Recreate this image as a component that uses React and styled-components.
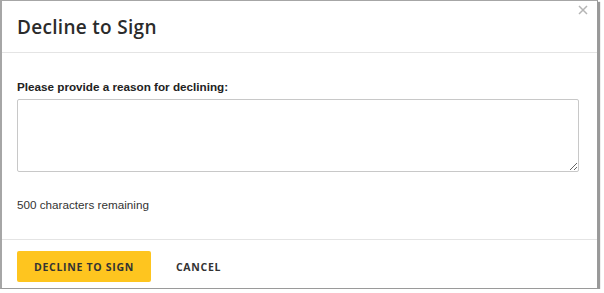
import styled, { createGlobalStyle } from "styled-components";

const GlobalStyle = createGlobalStyle`
  body {
    margin: 0;
    background: #ffffff;
    font-family: "Liberation Sans", Arial, sans-serif;
  }
`;

const Dialog = styled.div`
  box-sizing: border-box;
  position: relative;
  width: 598px;
  height: 289px;
  background: #fff;
  border-top: 1px solid #a6a6a6;
  border-left: 2px solid #a6a6a6;
  border-right: 1px solid #9a9a9a;
  border-bottom: 1px solid #9a9a9a;
  box-shadow: 2px 2px 1px rgba(0, 0, 0, 0.4);
  display: flex;
  flex-direction: column;
`;

const Header = styled.div`
  height: 52px;
  box-sizing: border-box;
  padding: 0 15px;
  display: flex;
  align-items: center;
  border-bottom: 1px solid #e4e4e4;
`;

const Title = styled.h1`
  margin: 0;
  font-family: "Open Sans", sans-serif;
  font-weight: 600;
  font-size: 19px;
  color: #2b2b2b;
  letter-spacing: 0.3px;
`;

const Close = styled.button`
  position: absolute;
  top: 2px;
  right: 8px;
  border: 0;
  background: none;
  padding: 0;
  width: 12px;
  height: 12px;
  cursor: pointer;
`;

const Body = styled.div`
  flex: 1;
  padding: 27px 17px 0 15px;
  display: flex;
  flex-direction: column;
`;

const Label = styled.label`
  font-weight: 700;
  font-size: 11.7px;
  color: #222;
  margin-bottom: 6px;
`;

const TextArea = styled.textarea`
  box-sizing: border-box;
  width: 562px;
  height: 73px;
  border: 1px solid #c8c8c8;
  border-radius: 2px;
  resize: vertical;
  font-family: inherit;
  font-size: 12px;
  margin: 0;
`;

const Remaining = styled.div`
  margin-top: 26px;
  font-size: 11.7px;
  color: #333;
`;

const Footer = styled.div`
  height: 49px;
  box-sizing: border-box;
  border-top: 1px solid #e4e4e4;
  padding: 0 15px 6px;
  display: flex;
  align-items: flex-end;
  gap: 25px;
`;

const Button = styled.button`
  height: 31px;
  padding: 0 ${(p) => (p.$primary ? "17px" : "0")};
  border: 0;
  border-radius: 2px;
  background: ${(p) => (p.$primary ? "#fec51f" : "transparent")};
  color: #333;
  font-family: "Open Sans", sans-serif;
  font-weight: 700;
  font-size: 10.5px;
  letter-spacing: 0.7px;
  cursor: pointer;
`;

export default function App() {
  return (
    <>
      <GlobalStyle />
      <Dialog>
        <Close aria-label="Close">
          <svg width="10" height="10" viewBox="0 0 10 10">
            <path d="M1 1 L9 9 M9 1 L1 9" stroke="#b5b5b5" strokeWidth="1.5" />
          </svg>
        </Close>
        <Header>
          <Title>Decline to Sign</Title>
        </Header>
        <Body>
          <Label>Please provide a reason for declining:</Label>
          <TextArea />
          <Remaining>500 characters remaining</Remaining>
        </Body>
        <Footer>
          <Button $primary>DECLINE TO SIGN</Button>
          <Button>CANCEL</Button>
        </Footer>
      </Dialog>
    </>
  );
}
